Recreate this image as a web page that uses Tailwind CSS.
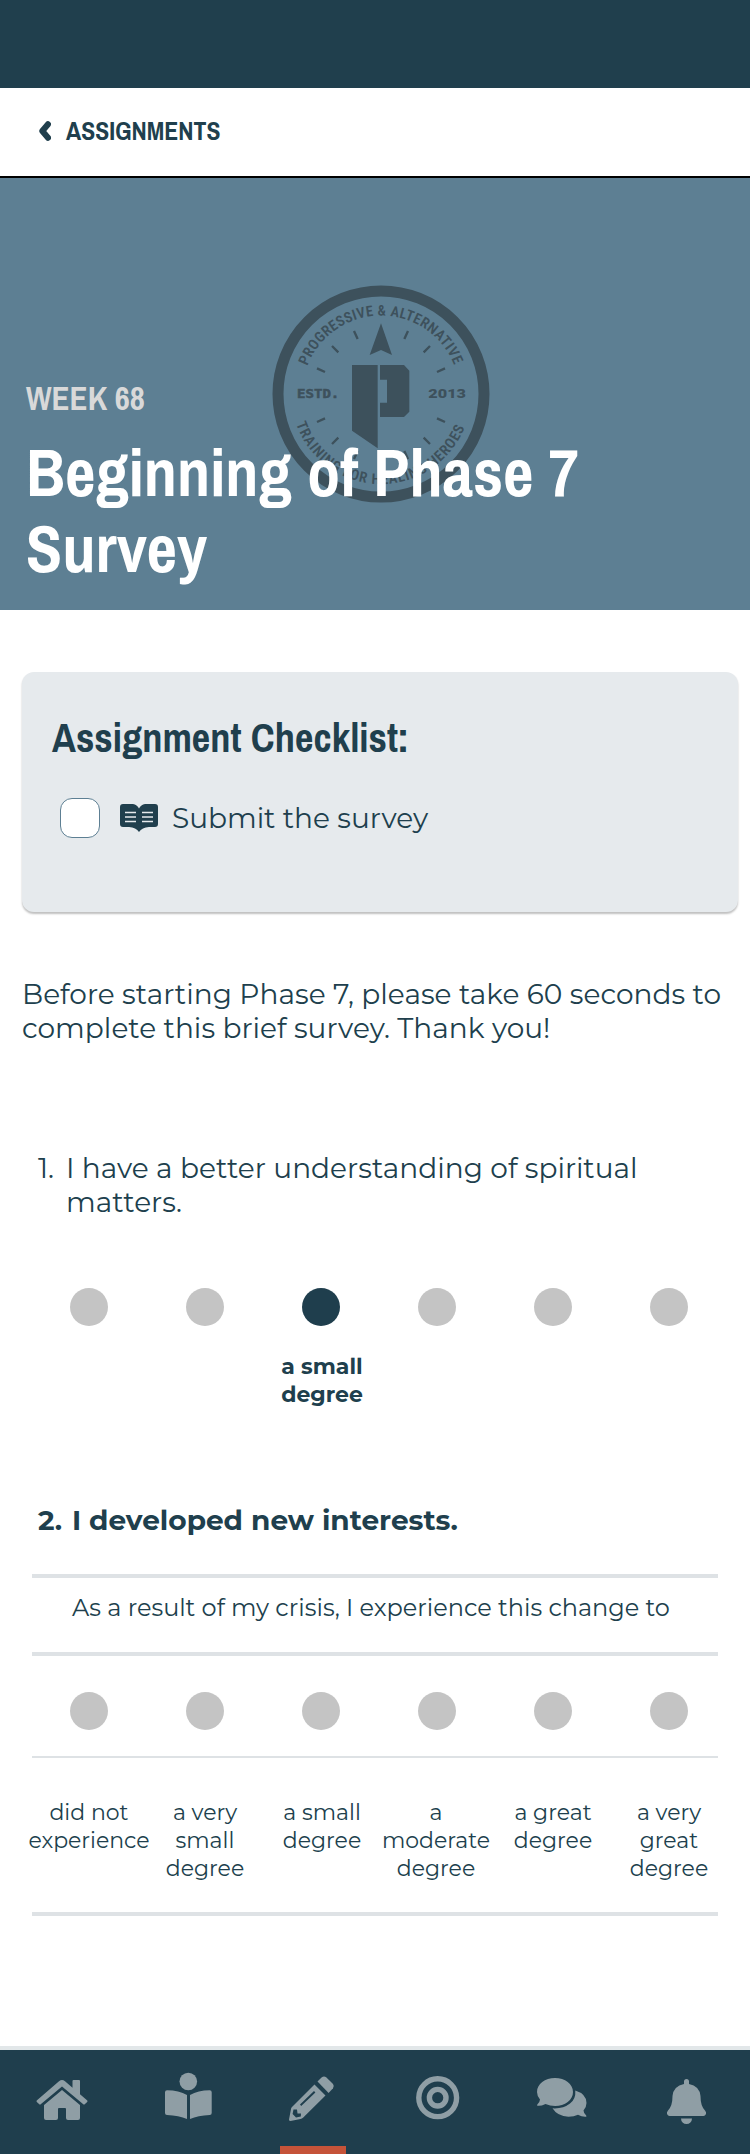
<!DOCTYPE html>
<html lang="en">
<head>
<meta charset="utf-8">
<title>Beginning of Phase 7 Survey</title>
<script src="https://cdn.jsdelivr.net/npm/@tailwindcss/browser@4"></script>
</head>
<body class="bg-white">
<div class="flex h-[2154px] w-[750px] flex-col overflow-hidden bg-white font-['Montserrat','Inter',sans-serif] text-[28px] leading-[34px] text-[#203f4d]">
  <div class="h-[88px] shrink-0 bg-[#203f4d]"></div>

  <header class="flex h-[90px] shrink-0 items-center border-b-2 border-black bg-white pb-[2px] pl-[39px]">
    <svg class="h-[20px] w-[12px]" viewBox="0 0 12 20" fill="none" stroke="#203f4d" stroke-width="6" stroke-linecap="round" stroke-linejoin="round"><path d="M9 3.200 3.300 10 9 16.800"/></svg>
    <span class="ml-[15px] font-['Archivo_Narrow','Liberation_Sans_Narrow',sans-serif] text-[25.700px] leading-[32px] font-bold">ASSIGNMENTS</span>
  </header>

  <section class="relative h-[432px] shrink-0 bg-[#5d7f93] font-['Archivo_Narrow','Liberation_Sans_Narrow',sans-serif] font-bold">
    <svg class="absolute top-[92px] left-[250px] h-[250px] w-[260px]" viewBox="0 0 780 750" fill="#3d515c">
      <defs>
        <path id="arcTop" d="M172 288A237 237 0 0 1 614 288"/>
        <path id="arcBottom" d="M138 461A270 270 0 0 0 648 461"/>
      </defs>
      <circle cx="393" cy="372" r="309" fill="none" stroke="#3d515c" stroke-width="33"/>
      <g font-family="Roboto Condensed" font-size="44" font-weight="600">
        <text><textPath href="#arcTop" textLength="566">PROGRESSIVE &amp; ALTERNATIVE</textPath></text>
        <text><textPath href="#arcBottom" textLength="655">TRAINING FOR HEALING HEROES</textPath></text>
      </g>
      <g font-size="37">
        <text x="141" y="384" font-family="DejaVu Sans Mono" font-weight="700" stroke="#3d515c" stroke-width="1.500" textLength="127" lengthAdjust="spacingAndGlyphs">ESTD.</text>
        <text x="535" y="384" font-family="Roboto" font-weight="900" textLength="113" lengthAdjust="spacingAndGlyphs">2013</text>
      </g>
      <path d="M393 160 426 255 393 240 359 255Z"/>
      <path d="M306 285H383V535L306 482Z"/>
      <path d="M390 285H462L478 302V425L462 441H390V398H411V329H390Z"/>
      <g stroke="#3d515c" stroke-width="7">
        <path d="M312 183 323 207M246 228 265 247M201 295 225 306M474 183 463 207M540 228 521 247M585 295 561 306M201 456 225 445M246 522 265 503M312 567 323 543M474 567 463 543M540 522 521 503M585 456 561 445"/>
      </g>
    </svg>
    <div class="relative pt-[199px] pl-[26px]">
      <p class="text-[33px] leading-[42px] text-[#d9d9d9]">WEEK 68</p>
      <h1 class="mt-[15px] text-[66.300px] leading-[76px] text-white">Beginning of Phase 7<br>Survey</h1>
    </div>
  </section>

  <section class="mt-[62px] ml-[22px] h-[240px] w-[716px] shrink-0 rounded-[12px] bg-[#e6eaed] pt-[41px] pl-[30px] shadow-[0_2px_2px_rgba(0,0,0,0.25)]">
    <h2 class="font-['Archivo_Narrow','Liberation_Sans_Narrow',sans-serif] text-[40.400px] leading-[50px] font-bold">Assignment Checklist:</h2>
    <div class="mt-[35px] ml-[8px] flex items-center">
      <span class="h-[40px] w-[40px] rounded-[12px] border border-[#5d7f93] bg-white"></span>
      <svg class="ml-[20px] h-[28px] w-[38px]" viewBox="0 0 38 28"><path fill="#203f4d" d="M3 0H13Q17 .5 19 4.500Q21 .5 25 0H35Q38 0 38 3V20Q38 23 35 23H29Q22 23.500 19 28Q16 23.500 9 23H3Q0 23 0 20V3Q0 0 3 0Z"/><path stroke="#e6eaed" stroke-width="1.500" d="M5 8.500H16M5 13H16M5 17.500H16M22 8.500H33M22 13H33M22 17.500H33"/></svg>
      <span class="ml-[14px]">Submit the survey</span>
    </div>
  </section>

  <p class="mt-[65px] ml-[22px] shrink-0 tracking-[0.025px]">Before starting Phase 7, please take 60 seconds to<br>complete this brief survey. Thank you!</p>

  <section class="mt-[106px] shrink-0">
    <div class="flex pl-[38px]"><span class="w-[28px]">1.</span><p class="tracking-[0.02px]">I have a better understanding of spiritual<br>matters.</p></div>
    <div class="mt-[69px] ml-[31px] grid w-[696px] grid-cols-6 justify-items-center">
      <i class="size-[38px] rounded-full bg-[#c4c4c4]"></i>
      <i class="size-[38px] rounded-full bg-[#c4c4c4]"></i>
      <i class="size-[38px] rounded-full bg-[#1f3e4d]"></i>
      <i class="size-[38px] rounded-full bg-[#c4c4c4]"></i>
      <i class="size-[38px] rounded-full bg-[#c4c4c4]"></i>
      <i class="size-[38px] rounded-full bg-[#c4c4c4]"></i>
    </div>
    <div class="mt-[27px] ml-[32px] grid w-[696px] grid-cols-6 text-center text-[22px] leading-[28px] font-bold">
      <p class="col-start-3">a small<br>degree</p>
    </div>
  </section>

  <section class="mt-[94px] shrink-0">
    <div class="flex pl-[38px] font-bold"><span class="w-[34px]">2.</span><p>I developed new interests.</p></div>
    <div class="mx-[32px] mt-[37px] h-[82px] border-y-4 border-[#dee2e5] pt-[15px] text-center text-[24px] leading-[30px]"><p class="-ml-[8px]">As a result of my crisis, I experience this change to</p></div>
    <div class="mx-[32px] h-[102px] border-b-2 border-[#dee2e5] pt-[36px]">
      <div class="-ml-px grid w-[696px] grid-cols-6 justify-items-center">
        <i class="size-[38px] rounded-full bg-[#c4c4c4]"></i>
        <i class="size-[38px] rounded-full bg-[#c4c4c4]"></i>
        <i class="size-[38px] rounded-full bg-[#c4c4c4]"></i>
        <i class="size-[38px] rounded-full bg-[#c4c4c4]"></i>
        <i class="size-[38px] rounded-full bg-[#c4c4c4]"></i>
        <i class="size-[38px] rounded-full bg-[#c4c4c4]"></i>
      </div>
    </div>
    <div class="mx-[32px] h-[158px] border-b-4 border-[#dee2e5] pt-[41px]">
      <div class="-ml-px grid w-[696px] grid-cols-[repeat(6,116px)] justify-items-center text-center text-[22px] leading-[28px] whitespace-nowrap">
        <p class="-mx-4">did not<br>experience</p>
        <p>a very<br>small<br>degree</p>
        <p class="ml-[2px]">a small<br>degree</p>
        <p class="-ml-[2px]">a<br>moderate<br>degree</p>
        <p>a great<br>degree</p>
        <p>a very<br>great<br>degree</p>
      </div>
    </div>
  </section>

  <nav class="mt-auto h-[108px] shrink-0 border-t-4 border-[#e2e7e9] bg-[#1f3e4d]">
    <svg class="block h-[104px] w-[750px]" viewBox="0 0 750 104" fill="#8f9ea5">
      <path d="M59 31.200Q62 28.600 65 31.200L72.500 37.700V31Q72.500 30 73.500 30H79Q80 30 80 31V44.200L87 50.200Q88 51 87.200 52L85 54Q84 55 83 54L62 36.500 41 54Q40 55 39 54L36.800 52Q36 51 37 50.200Z"/>
      <path d="M62 40 80 55V68Q80 70 78 70H68Q66 70 66 68V59Q66 58 65 58H59Q58 58 58 59V68Q58 70 56 70H46Q44 70 44 68V55Z"/>
      <circle cx="188.300" cy="31.500" r="8.800"/>
      <path d="M187 45Q179 40.500 167 40.300Q165 40.300 165 42.300V63Q165 65 167 65Q179 65.500 187 69ZM190 45Q198 40.500 209.700 40.300Q211.700 40.300 211.700 42.300V63Q211.700 65 209.700 65Q198 65.500 190 69Z"/>
      <path d="M317.500 31.500 321.800 27.200Q324 25.800 326.200 27.200L333 34Q334.500 36 333 38.200L328.600 43Z"/>
      <path fill-rule="evenodd" d="M314.500 34.500 325.500 45.500 303 67.800Q302 68.800 300.500 69L290.500 71Q289 71 289 69.500L291 59Q291 58 292 57ZM314 41 300 54.500 301.200 56 315.400 42.500ZM293.500 59.500 292.600 64 296 67.500 300.800 66.600 301 63.500H297.500L297 59.500Z"/>
      <circle cx="437.700" cy="47.700" r="18.900" fill="none" stroke="#8f9ea5" stroke-width="5.400"/>
      <circle cx="437.700" cy="47.700" r="8.300" fill="none" stroke="#8f9ea5" stroke-width="5.400"/>
      <path d="M555 28C565 28 573 34 573 42S565 56 555 56Q550 56 545.500 54Q541 56.200 537.500 55.800Q536.500 55.500 537.500 54.300Q540 51.500 540 49.500Q537 46 537 42C537 34 545 28 555 28Z"/>
      <path d="M575.300 40.500Q586.500 44 586.500 53Q586.500 57 583.500 60.500Q583.500 62.500 586 65.300Q587 66.500 586 66.700Q582 67 578 64.800Q574 66.700 568.500 66.700Q557.500 66.500 552.500 58.300Q563 59 570 53.500Q576 49 575.300 40.500Z"/>
      <path d="M684 32V31.500A2.500 2.500 0 0 1 689 31.500V34Q699.500 36 700.500 46Q700.500 56 705 60.500Q706.500 62 706 64Q705 66 703.500 66H669.500Q668 66 667 64Q666.500 62 668 60.500Q672.500 56 672.500 46Q673.500 36 684 34ZM681 68.500H692A5.500 5.500 0 0 1 681 68.500Z"/>
      <path fill="#c55339" d="M280 96H346V104H280Z"/>
    </svg>
  </nav>
</div>
</body>
</html>
